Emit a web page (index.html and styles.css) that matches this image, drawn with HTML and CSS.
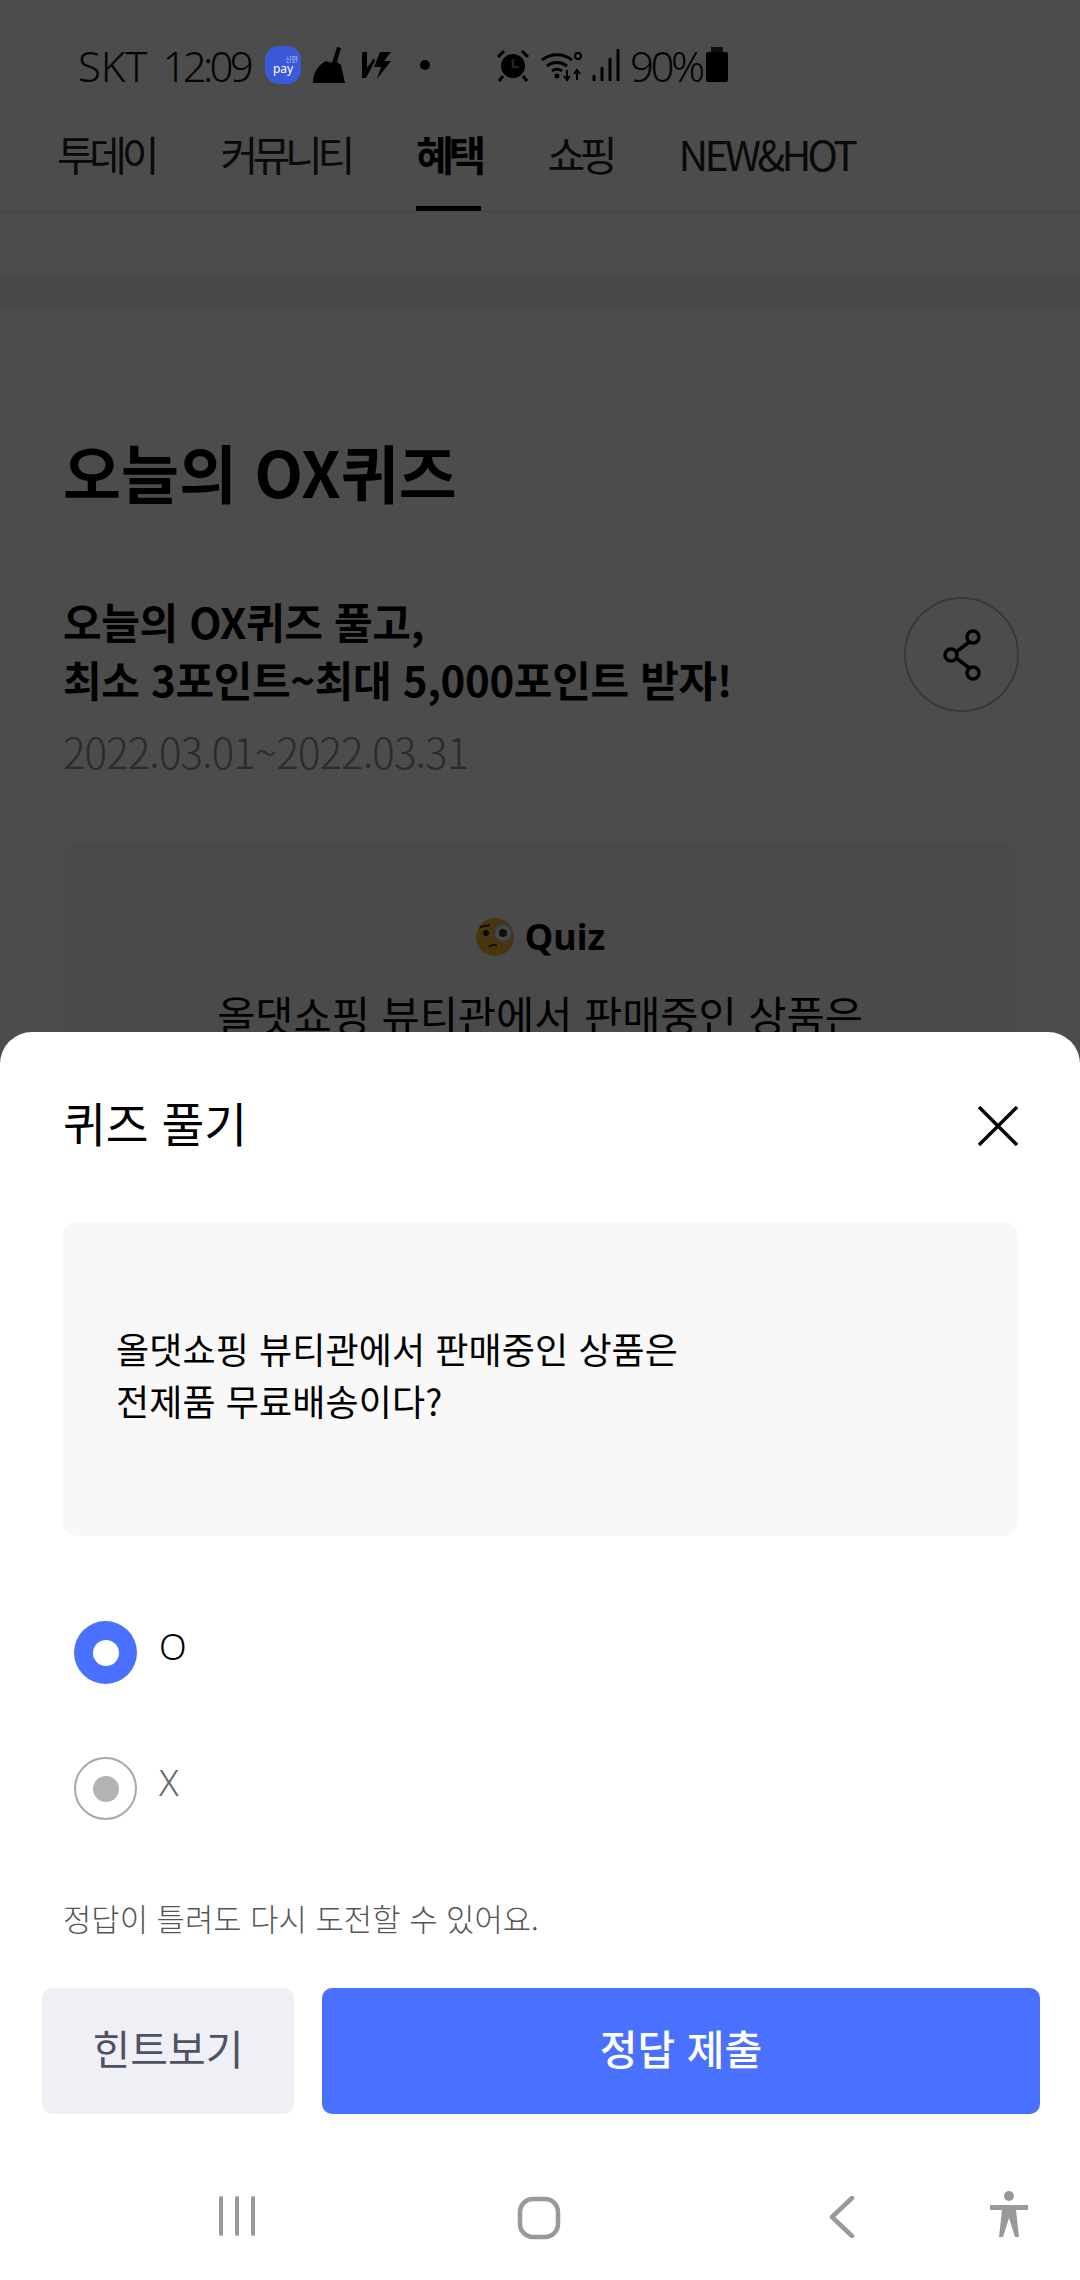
FILE: index.html
```html
<!DOCTYPE html>
<html lang="ko">
<head>
    <meta charset="UTF-8">
    <meta name="viewport" content="width=device-width, initial-scale=1.0">
    <title>오늘의 OX퀴즈</title>
    <link rel="stylesheet" href="styles.css">
</head>
<body>

    <div class="page">
        <div class="status-bar">
            <span class="carrier">SKT</span>
            <span class="clock">12:09</span>
            <span class="pay-icon"><small>신한</small><b>pay</b></span>
            <svg class="st-broom" viewBox="0 0 36 38"><path d="M25 1l4 1-4 14 4 3 4 18H1c0-10 5-18 13-22l6 2z" fill="#000"/></svg>
            <svg class="st-bolt" viewBox="0 0 34 32"><path d="M2 3h5v16L14 9l1 3-9 17H2zM20 3h11L24 12h7L17 30l4-12h-7z" fill="#000"/></svg>
            <span class="st-dot"></span>
            <svg class="st-alarm" viewBox="0 0 34 34"><circle cx="17" cy="18" r="12" fill="#000"/><path d="M17 11v8h6" fill="none" stroke="#777" stroke-width="2.5"/><path d="M2 9l6-6M32 9l-6-6M7 28l-4 5M27 28l4 5" stroke="#000" stroke-width="3"/></svg>
            <svg class="st-wifi" viewBox="0 0 44 34"><path d="M2 12a24 24 0 0 1 30 0M7 18a16 16 0 0 1 20 0M12 23a9 9 0 0 1 10 0" fill="none" stroke="#000" stroke-width="3"/><circle cx="17" cy="28" r="2.5" fill="#000"/><path d="M27 22v10M24 28l3 4 3-4M37 32V22M34 26l3-4 3 4" fill="none" stroke="#000" stroke-width="2"/><circle cx="38" cy="8" r="3" fill="none" stroke="#000" stroke-width="2"/></svg>
            <svg class="st-signal" viewBox="0 0 28 32"><path d="M2 31v-4M10 31V19M18 31V10M26 31V1" stroke="#000" stroke-width="3" stroke-linecap="round"/></svg>
            <span class="percent">90%</span>
            <span class="battery"></span>
        </div>

        <nav class="tabs">
            <a class="tab">투데이</a>
            <a class="tab">커뮤니티</a>
            <a class="tab active">혜택</a>
            <a class="tab">쇼핑</a>
            <a class="tab tab-en">NEW&amp;HOT</a>
        </nav>

        <div class="band"></div>

        <section class="event">
            <h1>오늘의 OX퀴즈</h1>
            <div class="event-head">
                <div>
                    <h2>오늘의 OX퀴즈 풀고,<br>최소 3포인트~최대 5,000포인트 받자!</h2>
                    <p class="date">2022.03.01~2022.03.31</p>
                </div>
                <button class="share">
                    <svg viewBox="0 0 40 52" width="40" height="52"><path d="M30 11L10 26l20 15" fill="none" stroke="#000" stroke-width="3.5"/><circle cx="31" cy="8" r="6" fill="#fff" stroke="#000" stroke-width="3.5"/><circle cx="9" cy="26" r="6" fill="#fff" stroke="#000" stroke-width="3.5"/><circle cx="31" cy="44" r="6" fill="#fff" stroke="#000" stroke-width="3.5"/></svg>
                </button>
            </div>
            <div class="quiz-box">
                <div class="quiz-label">
                    <svg viewBox="0 0 42 42" width="42" height="42"><circle cx="20" cy="21" r="19" fill="#f5b52e"/><circle cx="28" cy="17" r="9" fill="#eee" stroke="#bbb" stroke-width="2"/><circle cx="28" cy="17" r="4" fill="#333"/><circle cx="11" cy="17" r="3" fill="#222"/><path d="M5 11l10-2M14 31q4-4 8-1" fill="none" stroke="#4a2c08" stroke-width="2"/></svg>
                    <span>Quiz</span>
                </div>
                <p class="quiz-text">올댓쇼핑 뷰티관에서 판매중인 상품은</p>
            </div>
        </section>
    </div>

    <div class="dim"></div>

    <div class="sheet">
        <div class="sheet-head">
            <h3>퀴즈 풀기</h3>
            <svg class="close" viewBox="0 0 40 40" width="40" height="40"><path d="M1 1l38 38M39 1L1 39" stroke="#000" stroke-width="3.4"/></svg>
        </div>

        <div class="question">올댓쇼핑 뷰티관에서 판매중인 상품은<br>전제품 무료배송이다?</div>

        <div class="options">
            <label class="option">
                <span class="radio on"></span>
                <span class="option-text">O</span>
            </label>
            <label class="option off">
                <span class="radio"></span>
                <span class="option-text">X</span>
            </label>
        </div>

        <p class="notice">정답이 틀려도 다시 도전할 수 있어요.</p>

        <div class="actions">
            <button class="btn-hint">힌트보기</button>
            <button class="btn-submit">정답 제출</button>
        </div>

        <div class="nav-bar">
            <svg class="nav-recent" viewBox="0 0 38 40" width="38" height="40"><path d="M3 2v36M19 2v36M35 2v36" stroke="#999" stroke-width="4" stroke-linecap="round"/></svg>
            <svg class="nav-home" viewBox="0 0 44 44" width="44" height="44"><rect x="3" y="3" width="38" height="38" rx="13" fill="none" stroke="#999" stroke-width="4.5"/></svg>
            <svg class="nav-back" viewBox="0 0 26 42" width="26" height="42"><path d="M23 2L3 21l20 19" fill="none" stroke="#999" stroke-width="4.5" stroke-linecap="round" stroke-linejoin="round"/></svg>
            <svg class="nav-access" viewBox="0 0 40 48" width="40" height="48"><circle cx="20" cy="6" r="5" fill="#999"/><path d="M1 15h38v5H27l3 27h-4l-6-19-6 19h-4l3-27H1z" fill="#999"/></svg>
        </div>
    </div>

</body>
</html>
```

FILE: styles.css
```css
* {
    box-sizing: border-box;
}

body {
    margin: 0;
    width: 1080px;
    height: 2280px;
    position: relative;
    overflow: hidden;
    background-color: #ffffff;
    font-family: "Noto Sans CJK KR", "Noto Sans", sans-serif;
    color: #000000;
}

/* page behind the sheet */
.page {
    height: 2280px;
}

.status-bar {
    display: flex;
    align-items: center;
    height: 130px;
    padding-left: 78px;
    font-family: "Noto Sans", "Noto Sans CJK KR", sans-serif;
    font-size: 42px;
    font-weight: 300;
    letter-spacing: -2.5px;
    color: #111111;
}

.carrier {
    letter-spacing: -0.2px;
}

.clock {
    margin-left: 15px;
    letter-spacing: -3.7px;
}

/* the notification icon is not dimmed in the screenshot */
.pay-icon {
    position: relative;
    z-index: 1;
    width: 36px;
    height: 38px;
    margin-left: 15px;
    border-radius: 14px;
    background-color: #3a5ad9;
    color: #ffffff;
    display: flex;
    flex-direction: column;
    align-items: center;
    justify-content: center;
    letter-spacing: 0;
    line-height: 1;
}

.pay-icon small {
    font-size: 7px;
    align-self: flex-end;
    margin-right: 3px;
}

.pay-icon b {
    font-size: 12px;
}

.st-broom {
    width: 36px;
    height: 38px;
    margin-left: 11px;
}

.st-bolt {
    width: 34px;
    height: 32px;
    margin-left: 12px;
}

.st-dot {
    width: 10px;
    height: 10px;
    margin-left: 26px;
    border-radius: 50%;
    background-color: #000000;
}

.st-alarm {
    width: 34px;
    height: 34px;
    margin-left: 66px;
}

.st-wifi {
    width: 44px;
    height: 34px;
    margin-left: 10px;
}

.st-signal {
    width: 28px;
    height: 32px;
    margin-left: 8px;
}

.percent {
    margin-left: 10px;
    letter-spacing: -3.5px;
}

.battery {
    width: 22px;
    height: 30px;
    border-radius: 2px;
    background-color: #000000;
    position: relative;
    margin-left: 4px;
    top: 2px;
}

.battery::before {
    content: "";
    position: absolute;
    left: 5px;
    top: -5px;
    width: 12px;
    height: 5px;
    background-color: #333333;
}

.tabs {
    display: flex;
    gap: 66.5px;
    height: 82px;
    padding-left: 57px;
    border-bottom: 1px solid #e6e6e6;
}

.tab {
    height: 81px;
    font-size: 41px;
    line-height: 46px;
    letter-spacing: -5.4px;
    color: #222222;
    border-bottom: 5px solid transparent;
}

.tab-en {
    letter-spacing: -3.7px;
}

.tab.active {
    font-weight: 700;
    color: #000000;
    border-bottom-color: #000000;
}

.band {
    height: 30px;
    margin-top: 65px;
    background-color: #f0f0f0;
}

.event {
    padding: 119px 63px 0;
}

h1 {
    margin: 0;
    font-size: 63px;
    line-height: 90px;
    font-weight: 700;
}

.event-head {
    display: flex;
    justify-content: space-between;
    align-items: flex-start;
    margin-top: 76px;
}

h2 {
    margin: 0;
    font-size: 42px;
    line-height: 58px;
    font-weight: 700;
    letter-spacing: -0.35px;
}

.date {
    margin: 18px 0 0;
    font-size: 42px;
    line-height: 50px;
    font-weight: 300;
    letter-spacing: -0.9px;
    color: #8f8f8f;
}

.share {
    width: 115px;
    height: 115px;
    margin-top: 5px;
    margin-right: -2px;
    padding: 0;
    display: flex;
    align-items: center;
    justify-content: center;
    border: 2px solid #bbbbbb;
    border-radius: 50%;
    background-color: #ffffff;
}

.quiz-box {
    margin-top: 68px;
    height: 400px;
    padding-top: 68px;
    background-color: #f7f7f7;
    border-radius: 12px;
    text-align: center;
}

.quiz-label {
    display: flex;
    align-items: center;
    justify-content: center;
    gap: 8px;
    font-size: 36px;
    font-weight: 700;
    font-family: "Noto Sans", sans-serif;
}

.quiz-text {
    margin: 25px 0 0;
    font-size: 41.5px;
    line-height: 56px;
}

.dim {
    position: absolute;
    inset: 0;
    background-color: rgba(0, 0, 0, 0.7);
}

/* bottom sheet */
.sheet {
    position: absolute;
    left: 0;
    right: 0;
    bottom: 0;
    height: 1248px;
    padding-top: 58px;
    background-color: #ffffff;
    border-radius: 32px 32px 0 0;
}

.sheet-head {
    display: flex;
    justify-content: space-between;
    align-items: center;
    height: 64px;
    padding: 0 62px 0 63px;
}

h3 {
    margin: 0;
    font-size: 46.5px;
    line-height: 62px;
    font-weight: 400;
}

.close {
    margin-top: 8px;
}

.question {
    height: 314px;
    margin: 68px 62px 0 63px;
    padding-top: 100px;
    background-color: #f8f8f8;
    border-radius: 14px;
    padding-left: 53px;
    font-size: 36px;
    line-height: 52px;
    font-weight: 400;
    letter-spacing: 0.1px;
}

.options {
    display: flex;
    flex-direction: column;
    gap: 73px;
    margin-top: 85px;
    padding-left: 74px;
}

.option {
    display: flex;
    gap: 22px;
    height: 63px;
}

.radio {
    width: 63px;
    height: 63px;
    border-radius: 50%;
    border: 2px solid #a8a8a8;
    display: flex;
    align-items: center;
    justify-content: center;
}

.radio::after {
    content: "";
    width: 26px;
    height: 26px;
    border-radius: 50%;
    background-color: #b3b3b3;
}

.radio.on {
    border: none;
    background-color: #4a70ff;
}

.radio.on::after {
    background-color: #ffffff;
}

.option-text {
    font-size: 36px;
    line-height: 52px;
    font-weight: 300;
    font-family: "Noto Sans", sans-serif;
}

.off .option-text {
    color: #666666;
}

.notice {
    margin: 75px 0 0 63px;
    font-size: 30.8px;
    line-height: 46px;
    font-weight: 300;
    color: #555555;
}

.actions {
    display: flex;
    gap: 28px;
    margin-top: 47px;
    padding: 0 40px 0 42px;
}

.actions button {
    height: 126px;
    padding-bottom: 10px;
    border: none;
    border-radius: 10px;
    font-family: inherit;
    font-size: 41px;
}

.btn-hint {
    width: 252px;
    background-color: #eff0f5;
    color: #4f5263;
}

.btn-submit {
    flex: 1;
    background-color: #4a70ff;
    color: #ffffff;
    font-weight: 500;
}

.nav-bar {
    position: relative;
    height: 166px;
}

.nav-bar svg {
    position: absolute;
}

.nav-recent { left: 218px; top: 82px; }
.nav-home { left: 517px; top: 82px; }
.nav-back { left: 829px; top: 82px; }
.nav-access { left: 989px; top: 76px; }
```
